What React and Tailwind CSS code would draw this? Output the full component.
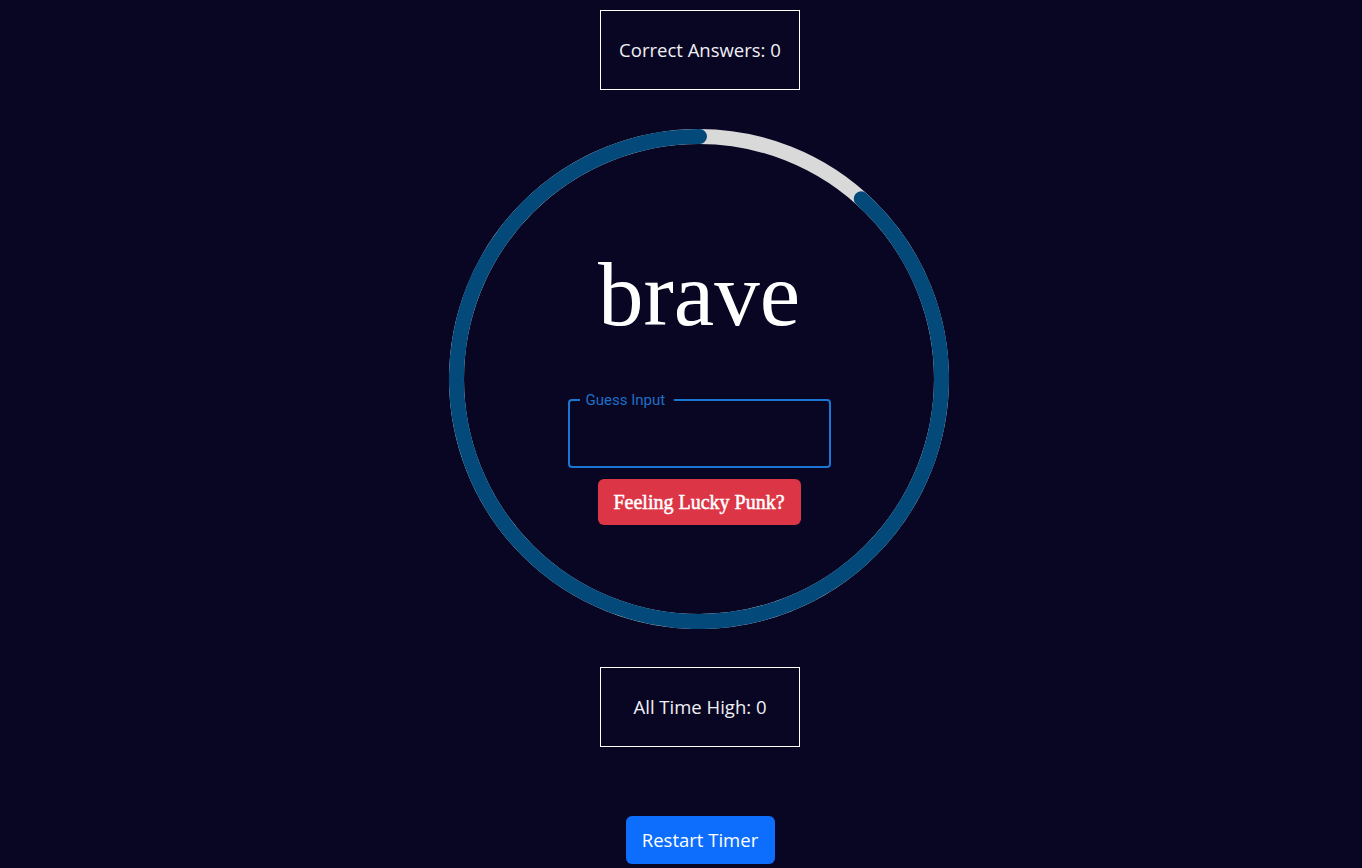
import React from "react";

function Ring() {
  const r = 242.5;
  const t = (42 * Math.PI) / 180;
  const sx = 250 + r * Math.sin(t);
  const sy = 250 - r * Math.cos(t);
  return (
    <svg width="500" height="500" viewBox="0 0 500 500" className="absolute inset-0">
      <circle cx="250" cy="250" r={r} fill="none" stroke="#d9d9d9" strokeWidth="15" />
      <path
        d={`M ${sx} ${sy} A ${r} ${r} 0 1 1 250.5 7.5`}
        fill="none"
        stroke="#034a7b"
        strokeWidth="15"
        strokeLinecap="round"
      />
    </svg>
  );
}

export default function App() {
  return (
    <div className="min-h-[868px] w-full bg-[#090624] flex flex-col items-center pl-[38px]" style={{ fontFamily: '"Open Sans", "Noto Sans", sans-serif' }}>
      <div className="mt-[10px] w-[200px] h-[80px] border border-white flex items-center justify-center text-[18.5px] text-[#f0f0f5]">
        Correct Answers: 0
      </div>
      <div className="relative mt-[39px] w-[500px] h-[500px] -translate-x-px flex flex-col items-center pt-[120px]">
        <Ring />
        <div className="relative text-white text-[91px] leading-none" style={{ fontFamily: '"Liberation Serif", "Times New Roman", serif' }}>
          brave
        </div>
        <div className="relative mt-[59px] w-[263px] h-[69px] border-2 border-[#1976d2] rounded-[4px]">
          <span className="absolute -top-[11px] left-[10px] pl-[6px] pr-[9px] bg-[#090624] text-[15px] leading-[20px] text-[#1f6fc5]" style={{ fontFamily: 'Roboto, sans-serif' }}>
            Guess Input
          </span>
        </div>
        <button className="relative mt-[11px] w-[203px] h-[46px] rounded-[6px] bg-[#dc3545] text-white text-[20px] [-webkit-text-stroke:0.5px_white]" style={{ fontFamily: '"Liberation Serif", "Times New Roman", serif' }}>
          Feeling Lucky Punk?
        </button>
      </div>
      <div className="mt-[38px] w-[200px] h-[80px] border border-white flex items-center justify-center text-[18.5px] text-[#f0f0f5]">
        All Time High: 0
      </div>
      <button className="mt-[69px] w-[149px] h-[48px] rounded-[6px] bg-[#0d6efd] text-white text-[18.5px]">
        Restart Timer
      </button>
    </div>
  );
}
